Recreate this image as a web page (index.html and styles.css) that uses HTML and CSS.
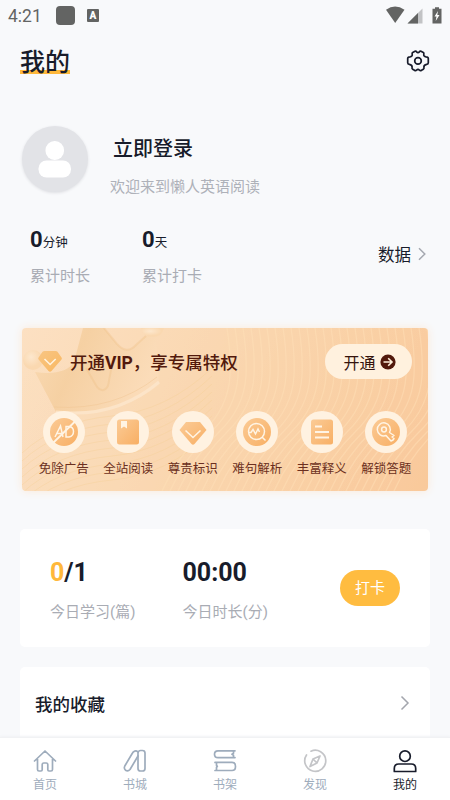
FILE: index.html
```html
<!DOCTYPE html>
<html lang="zh-CN">
<head>
<meta charset="utf-8">
<meta name="viewport" content="width=device-width, initial-scale=1">
<title>我的</title>
<link rel="stylesheet" href="styles.css">
</head>
<body>
<div class="app">
  <header class="status">
    <span class="clock">4:21</span>
    <span class="status-square"></span>
    <span class="status-a">A</span>
    <svg class="status-icons" width="58" height="18" viewBox="0 0 58 18">
      <path d="M1 3.800Q10-3 19.500 3.800L10.200 17z" fill="#636463"/>
      <path d="M37.500 2.500V17.500H22.500z" fill="#c2c3c5"/>
      <path d="M33 7V17.500H22.500z" fill="#636463"/>
      <path d="M50 1.200h4v1.500h2.500V17.500h-9V2.700H50z" fill="#636463"/>
      <path d="M53 5l-3.500 5.500h2l-.8 4.500 3.800-6h-2.200z" fill="#fff"/>
    </svg>
  </header>

  <div class="titlebar">
    <h1>我的</h1>
    <svg width="24" height="24" viewBox="0 0 24 24" fill="none" stroke="#181c2b" stroke-width="1.700" stroke-linejoin="round">
      <path d="M9 2.200Q10 1.800 10.600 2.800Q12 4.300 13.400 2.800Q14 1.800 15 2.200L17.300 3.500Q18.200 4 17.800 5.200Q17.400 7.600 20 7.900Q22.300 8 22.300 9.500V13.800Q22.300 15.200 20.700 15.300Q17.700 15.700 17.900 18.200Q18.300 19.700 17.300 20.300L15.100 21.600Q14.100 22 13.400 21.100Q12 19.700 10.600 21.100Q9.900 22 8.900 21.600L6.700 20.300Q5.700 19.700 6.100 18.200Q6.300 15.700 3.300 15.300Q1.700 15.200 1.700 13.800V9.500Q1.700 8 4 7.900Q6.600 7.600 6.200 5.200Q5.800 4 6.700 3.500z"/>
      <circle cx="12" cy="11.900" r="3.300"/>
    </svg>
  </div>

  <section class="profile">
    <div class="avatar">
      <svg width="66" height="66" viewBox="0 0 66 66" fill="#fff"><rect x="23.500" y="15" width="18.500" height="19" rx="9"/><rect x="16.500" y="34.500" width="32.500" height="17" rx="8"/></svg>
    </div>
    <div class="who">
      <h2>立即登录</h2>
      <p>欢迎来到懒人英语阅读</p>
    </div>
  </section>

  <section class="totals">
    <div class="total"><p class="figure"><b>0</b>分钟</p><p class="caption">累计时长</p></div>
    <div class="total"><p class="figure"><b>0</b>天</p><p class="caption">累计打卡</p></div>
    <a class="data">数据
      <svg width="8" height="14" viewBox="0 0 8 14" fill="none" stroke="#a5a8b0" stroke-width="1.500"><path d="M1 1.200l5.800 5.800L1 12.800"/></svg>
    </a>
  </section>

  <section class="vip">
    <svg class="vip-art" width="406" height="163" viewBox="0 0 406 163" fill="none">
      <defs>
        <linearGradient id="crown" x1="0" y1="0" x2="1" y2=".3"><stop stop-color="#f9d9b2"/><stop offset=".4" stop-color="#f5cfa0"/><stop offset="1" stop-color="#fbdcb9"/></linearGradient>
        <radialGradient id="ball" cx=".4" cy=".35"><stop stop-color="#fde7cd"/><stop offset="1" stop-color="#fad8b0"/></radialGradient>
        <linearGradient id="fill" x1="0" y1="0" x2="1" y2="1"><stop stop-color="#fbcb96"/><stop offset="1" stop-color="#f8af64"/></linearGradient>
        <linearGradient id="gem" x1="0" y1="0" x2="1" y2="1"><stop stop-color="#f8c583"/><stop offset="1" stop-color="#f9b862"/></linearGradient>
      </defs>
      <g class="waves-bottom" id="wavesBottom"></g>
      <g class="waves-top" id="wavesTop"></g>
      <path d="M13 44Q43 48 52 34L61 0H82L95 16Q105 27 114 17L124 8H134L137 57Q93 91 34 84Z" fill="url(#crown)" opacity=".9"/>
      <path d="M82 0L95 16Q105 27 114 17L124 8M64 40L75 59Q81 66 86 58L90 37" stroke="#efbf86" stroke-width="2" opacity=".35"/>
      <path d="M34 84Q93 91 137 54" stroke="#fce4c8" stroke-width="3"/>
      <path d="M32 79Q92 83 135 49" stroke="#efc390" opacity=".45"/>
      <circle cx="11" cy="32" r="10" fill="url(#ball)"/>
      <path d="M119 0Q121 9 131 9Q140 9 142 0z" fill="url(#ball)"/>
    </svg>
    <div class="vip-head">
      <svg width="24" height="22" viewBox="0 0 24 22"><path d="M6.500 0h11q1.300 0 2 .8L23.500 6.500q.7 1 0 2L13.500 20Q12 21.500 10.500 20L.6 8.500q-.7-1 0-2L4.500 .8Q5.200 0 6.500 0z" fill="url(#gem)"/><path d="M6.500 8l5.600 5.500L17.700 8" fill="none" stroke="#fff3df" stroke-width="1.600"/></svg>
      <h3>开通<b>VIP</b>，享专属特权</h3>
      <a class="open">开通
        <svg width="16" height="16" viewBox="0 0 16 16" fill="none"><circle cx="8" cy="8" r="7.600" fill="#52190c"/><path d="M3.500 8h8M8.200 4.300L12 8l-3.800 3.700" stroke="#fff0db" stroke-width="1.600"/></svg>
      </a>
    </div>
    <ul class="perks">
      <li><svg viewBox="0 0 42 42"><circle cx="21" cy="21" r="14" fill="url(#fill)"/><g fill="none" stroke="#fff4e4" stroke-width="1.500"><path d="M12 26l5.500-11 2.500 11M13.500 22.500h6M23 15.500v10.500h3q4.500-1 4.500-5.500t-4.500-5z"/><path d="M10.500 31.500L32 10.500" stroke-width="1.800"/></g></svg>免除广告</li>
      <li><svg viewBox="0 0 42 42"><rect x="10" y="8.500" width="22" height="25" rx="2.500" fill="url(#fill)"/><path d="M14 10h6v7.500l-3-2-3 2z" fill="#fff4e4"/></svg>全站阅读</li>
      <li><svg viewBox="0 0 42 42"><path d="M14 11h14l6.500 8L22.500 33q-1.500 1.500-3 0L7.500 19z" fill="url(#fill)"/><path d="M13.500 19.500L21 26.500l7.500-7" fill="none" stroke="#fff4e4" stroke-width="1.600"/></svg>尊贵标识</li>
      <li><svg viewBox="0 0 42 42"><circle cx="21" cy="21" r="14" fill="url(#fill)"/><g fill="none" stroke="#fff4e4" stroke-width="1.500"><circle cx="20.500" cy="20.500" r="8"/><path d="M26 26l3.500 3.500M12 21.500h3l2-3 2.500 4.500 2.500-5 1.500 3"/></g></svg>难句解析</li>
      <li><svg viewBox="0 0 42 42"><rect x="10" y="8.500" width="22" height="25" rx="2.500" fill="url(#fill)"/><path d="M14 15.500h7M14 21h14M14 26.500h14" stroke="#fff4e4" stroke-width="1.800"/></svg>丰富释义</li>
      <li><svg viewBox="0 0 42 42"><circle cx="21" cy="21" r="14" fill="url(#fill)"/><g fill="none" stroke="#fff4e4" stroke-width="1.500"><path d="M24.500 21.500a6.500 6.500 0 1 0-3.500 3l5 5.500 2-1 1-1.500-2-1.500 2-1.500z" stroke-linejoin="round"/><circle cx="19" cy="18.500" r="2.400"/></g></svg>解锁答题</li>
    </ul>
  </section>

  <section class="card today">
    <div class="stat"><p class="number"><span>0</span>/1</p><p class="caption">今日学习(篇)</p></div>
    <div class="stat"><p class="number">00:00</p><p class="caption">今日时长(分)</p></div>
    <button>打卡</button>
  </section>

  <section class="card favorites">
    <h3>我的收藏</h3>
    <svg width="10" height="16" viewBox="0 0 10 16" fill="none" stroke="#a3a6ad" stroke-width="1.500"><path d="M1.500 1.500L8 8l-6.500 6.500"/></svg>
  </section>

  <nav>
    <a><svg viewBox="0 0 24 24"><path d="M1.500 12L12 2l10.500 10M4.500 10v10.500q0 1.500 1.500 1.500h2q1.200 0 1.200-1.200V15.500q0-1.500 1.500-1.500h2.600q1.500 0 1.500 1.500v5.300q0 1.200 1.200 1.200h2q1.500 0 1.500-1.500V10"/></svg>首页</a>
    <a><svg viewBox="0 0 24 24"><rect x="15" y="1.500" width="7" height="20.500" rx="2.500"/><path d="M15 3Q13 1 11 2.500Q10 3 9.500 4L1.800 17Q.6 19.500 2.500 21.200Q5 22.800 7 20.500L15 7"/></svg>书城</a>
    <a><svg viewBox="0 0 24 24"><path d="M22 1.800H5Q1.500 1.800 1.500 5.200T5 8.600H22M20.500 2v2.200l-1.500 1 1.500 1v2.200M2 13.400H19Q22.500 13.400 22.500 17.400T19 21.500H2M3.500 13.600v2.800l.8 1-.8 1v3"/></svg>书架</a>
    <a class="discover"><svg viewBox="0 0 24 24"><path d="M8 2.200A10.500 10.500 0 1 1 3.500 6M17 7l-3 7-7 3.500 3-7.500zM10 10l4 4"/></svg>发现</a>
    <a class="active"><svg viewBox="0 0 24 24"><circle cx="12" cy="7.200" r="5.300"/><path d="M1.300 22.500v-3q0-4.500 4.500-4.500h12.400q4.500 0 4.500 4.500v3z"/></svg>我的</a>
  </nav>
</div>
<script src="waves.js"></script>
</body>
</html>
```

FILE: styles.css
```css
* { box-sizing: border-box; margin: 0; padding: 0; }

body {
  font-family: Roboto, "Noto Sans CJK SC", sans-serif;
  background: #f8f9fb;
  color: #181c2b;
}

svg { display: block; flex: none; }

.app {
  display: flex;
  flex-direction: column;
  height: 800px;
  overflow: hidden;
}

.status {
  display: flex;
  align-items: center;
  flex: none;
  height: 30px;
  padding: 0 8px 0 8px;
  color: #636463;
}
.clock { width: 48px; padding-top: 1px; font-size: 17.5px; line-height: 30px; }
.status-square { width: 19px; height: 19px; border-radius: 4px; background: #636463; }
.status-a {
  width: 12px;
  height: 13px;
  margin-left: 12px;
  border-radius: 1px;
  background: #636463;
  color: #fff;
  font-size: 10px;
  font-weight: 900;
  line-height: 13px;
  text-align: center;
}
.status-icons { margin-left: auto; margin-right: -1px; margin-top: -1px; }

.titlebar {
  display: flex;
  align-items: center;
  justify-content: space-between;
  flex: none;
  height: 62px;
  padding: 0 20px;
}
.titlebar h1 {
  width: 50px;
  padding-top: 4px;
  background: linear-gradient(#ffb83b, #ffb83b) 0 27px / 50px 4px no-repeat;
  font-size: 25px;
  font-weight: 500;
  line-height: 32px;
  white-space: nowrap;
}

.profile { display: flex; flex: none; padding: 34px 22px 0; height: 134px; }
.avatar {
  width: 66px;
  height: 66px;
  border-radius: 50%;
  background: #e2e3e7;
  box-shadow: 0 1px 3px #dddee2;
}
.who { padding: 8px 0 0 22px; }
.who h2 { padding-left: 3px; font-size: 20px; font-weight: 500; line-height: 30px; }
.who p { margin-top: 12px; color: #aeb1b9; font-size: 15px; line-height: 22px; }

.totals { display: flex; flex: none; height: 102px; padding: 0 23px 0 30px; }
.total { width: 112px; }
.figure { height: 28px; font-size: 12.5px; line-height: 28px; white-space: nowrap; }
.figure b { font-size: 22px; font-weight: 700; }
.caption { color: #a9acb4; font-size: 15px; line-height: 22px; }
.total .caption { margin-top: 11px; }
.data {
  display: flex;
  align-items: center;
  gap: 7px;
  height: 24px;
  margin: 16px 1px 0 auto;
  font-size: 16.5px;
}

.vip {
  position: relative;
  flex: none;
  height: 163px;
  margin: 0 22px;
  border-radius: 4px;
  background: linear-gradient(115deg, #fce0c2, #fad7b0 45%, #f9c99b);
  box-shadow: 0 0 10px #fbe9d8;
}
.vip-art { position: absolute; inset: 0; border-radius: 4px; }
.waves-bottom { stroke: #f5cf97; opacity: .4; }
.waves-top { stroke: #ffe2ba; opacity: .45; stroke-width: 1.2; }
.vip-head {
  position: relative;
  display: flex;
  align-items: center;
  height: 67px;
  padding: 0 16px;
  color: #52190c;
}
.vip-head h3 { margin-left: 8px; padding-top: 3px; font-size: 17.5px; font-weight: 500; line-height: 26px; white-space: nowrap; }
.vip-head b { font-weight: 700; }
.open {
  display: flex;
  align-items: center;
  justify-content: center;
  gap: 4px;
  width: 87px;
  height: 35px;
  padding-left: 2px;
  margin: 0 0 0 auto;
  border-radius: 18px;
  background: #fff1de;
  color: #35130c;
  font-size: 16px;
}
.perks {
  position: relative;
  display: flex;
  padding: 16px 9.5px 0;
  list-style: none;
}
.perks li {
  flex: 1;
  display: flex;
  flex-direction: column;
  align-items: center;
  color: #6b2f20;
  font-size: 12.5px;
  line-height: 18px;
  white-space: nowrap;
}
.perks svg { width: 42px; height: 42px; margin-bottom: 7px; border-radius: 50%; background: #fff2e1; }

.card { flex: none; margin: 0 20px; border-radius: 5px; background: #fff; }
.today { display: flex; height: 118px; margin-top: 38px; padding: 29px 30px 0; }
.stat { width: 132.5px; }
.number { font-size: 25px; font-weight: 700; line-height: 30px; }
.number span { color: #ffb83b; }
.stat .caption { margin-top: 13px; }
.today button {
  width: 60px;
  height: 36px;
  margin: 12px 0 0 auto;
  border: 0;
  border-radius: 18px;
  background: #ffbc40;
  color: #fff;
  font: 15px/36px Roboto, "Noto Sans CJK SC", sans-serif;
}
.favorites {
  display: flex;
  align-items: center;
  justify-content: space-between;
  height: 70px;
  margin-top: 20px;
  padding: 2px 20px 0 15px;
  border-radius: 5px 5px 0 0;
}
.favorites h3 { font-size: 17.5px; font-weight: 500; line-height: 26px; padding-top: 4px; }

nav {
  display: flex;
  flex: none;
  height: 63px;
  border-top: 1px solid #f1f2f4;
  background: #fff;
  box-shadow: 0 -1px 2px #f1f2f5;
}
nav a {
  flex: 1;
  display: flex;
  flex-direction: column;
  align-items: center;
  padding-top: 11px;
  color: #9eacbc;
  font-size: 12px;
  line-height: 18px;
}
nav svg { width: 24px; height: 24px; margin-bottom: 3px; fill: none; stroke: currentColor; stroke-width: 1.7; stroke-linejoin: round; stroke-linecap: round; }
.discover svg { color: #c4c5c8; }
.active { color: #181c2b; }
```

FILE: waves.js
```js
// Contour lines over the VIP card.
function addWaves(id, count, shape) {
  const group = document.getElementById(id);
  for (let i = 0; i < count; i++) {
    const path = document.createElementNS("http://www.w3.org/2000/svg", "path");
    path.setAttribute("d", shape(i));
    group.appendChild(path);
  }
}

addWaves("wavesBottom", 9, i => {
  const y = 125 + i * 8;
  return `M0 ${y}Q35 ${y - 32} 90 ${y - 37}T190 ${y - 85}`;
});

addWaves("wavesTop", 30, i => {
  const x = 205 + i * 8;
  return `M${x} 0Q${x + 4} 25 ${x + 3} 48Q${x + 1} 80 ${x - 24} 104T${x - 65} 163`;
});
```
